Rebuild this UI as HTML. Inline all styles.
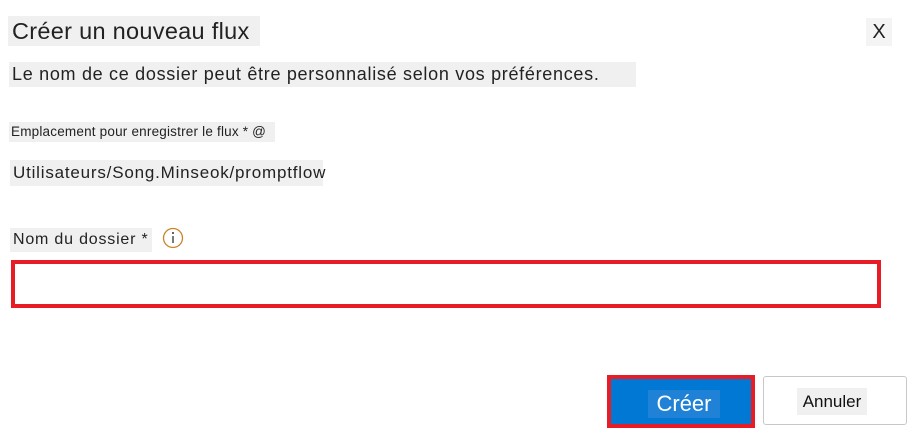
<!DOCTYPE html>
<html><head><meta charset="utf-8"><style>
html,body{margin:0;padding:0;background:#fff;width:910px;height:441px;overflow:hidden;position:relative;font-family:"Liberation Sans",sans-serif;color:#222}
.t{position:absolute;background:#f0f0f0;white-space:nowrap;line-height:1;transform-origin:left center}
</style></head><body>
<div class="t" style="left:8px;top:16px;height:30px;padding:0 6px 0 4px;font-size:23.5px;letter-spacing:0.3px;line-height:30px;width:242px">Créer un nouveau flux</div>
<div class="t" style="left:866px;top:18px;height:28px;line-height:28px;font-size:20px;width:26px;text-align:center;background:#f4f4f4">X</div>
<div class="t" style="left:9px;top:62px;height:25px;line-height:25px;font-size:18px;letter-spacing:0.7px;width:627px;padding-left:3px;box-sizing:border-box">Le nom de ce dossier peut être personnalisé selon vos préférences.</div>
<div class="t" style="left:9px;top:122px;height:20px;line-height:20px;font-size:13.5px;letter-spacing:0.2px;width:266px;padding-left:2px;box-sizing:border-box">Emplacement pour enregistrer le flux * @</div>
<div class="t" style="left:10px;top:160px;height:26px;line-height:26px;font-size:17px;letter-spacing:0.8px;width:313px;padding-left:3px;box-sizing:border-box">Utilisateurs/Song.Minseok/promptflow</div>
<div class="t" style="left:10px;top:228px;height:24px;line-height:24px;font-size:16px;letter-spacing:0.8px;width:142px;padding-left:3px;box-sizing:border-box">Nom du dossier *</div>
<svg style="position:absolute;left:162px;top:227px" width="22" height="22" viewBox="0 0 22 22"><circle cx="11" cy="11" r="9.5" fill="none" stroke="#c9842a" stroke-width="1.3"/><line x1="11" y1="9" x2="11" y2="16" stroke="#333" stroke-width="1.3"/><circle cx="11" cy="6" r="1" fill="#333"/></svg>
<div style="position:absolute;left:11px;top:260px;width:862px;height:40px;border:4px solid #e81c24;background:#fff"></div>
<div style="position:absolute;left:607px;top:375px;width:140px;height:45px;border:4px solid #e81c24;background:#0078d4"></div>
<div style="position:absolute;left:648px;top:390px;width:72px;height:28px;background:#1f82d6;color:#fff;font-size:22px;line-height:28px;text-align:center">Créer</div>
<div style="position:absolute;left:763px;top:376px;width:142px;height:47px;border:1px solid #c8c8c8;border-radius:3px;background:#fff"></div>
<div class="t" style="left:797px;top:388px;height:27px;line-height:27px;width:70px;font-size:17px;color:#111;text-align:center">Annuler</div>
</body></html>
